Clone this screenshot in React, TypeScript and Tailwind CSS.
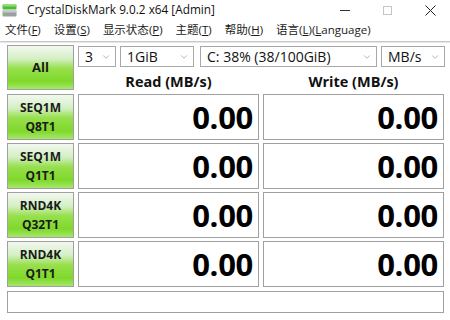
import { ChevronDown } from "lucide-react";

const font = { fontFamily: '"Open Sans", "Noto Sans CJK SC", sans-serif' };

const menus = [
  ["文件", "F"],
  ["设置", "S"],
  ["显示状态", "P"],
  ["主题", "T"],
  ["帮助", "H"],
];

const tests = [
  ["SEQ1M", "Q8T1"],
  ["SEQ1M", "Q1T1"],
  ["RND4K", "Q32T1"],
  ["RND4K", "Q1T1"],
];

function AppIcon() {
  return (
    <svg width="15" height="13" viewBox="0 0 15 13">
      <rect x="0.5" y="0.5" width="14" height="5" rx="1" fill="#4cbb3c" />
      <rect x="0.5" y="0.5" width="14" height="2" rx="1" fill="#8fdc6a" />
      <rect x="0.5" y="6.5" width="14" height="6" rx="1" fill="#9aa0a4" />
      <rect x="0.5" y="6.5" width="14" height="2" fill="#c6cacc" />
      <rect x="2" y="9.5" width="3" height="1.5" fill="#5fd040" />
    </svg>
  );
}

function Select({ width, label }: { width: string; label: string }) {
  return (
    <div
      className={`${width} h-[21px] flex items-center justify-between border border-[#a8a8a8] bg-white pl-[6px] pr-[4px] text-[14px] text-[#111]`}
    >
      <span className="leading-none">{label}</span>
      <ChevronDown className="w-[10px] h-[10px] text-[#888]" strokeWidth={1.5} />
    </div>
  );
}

function GreenButton({ children, className }: { children: React.ReactNode; className: string }) {
  return (
    <div
      className={`${className} w-[67px] flex flex-col items-center justify-center border border-[#a0a0a0] bg-[linear-gradient(180deg,#f2f8ef_0%,#d4efc4_30%,#97e04c_52%,#7fd82a_82%,#a6e86c_100%)] font-bold text-[12px] text-[#1a1a1a]`}
    >
      {children}
    </div>
  );
}

function Value() {
  return (
    <div className="w-[181px] h-[46px] flex items-center justify-end border border-[#a0a0a0] bg-white pr-[5px]">
      <span className="text-[31px] font-bold leading-none text-black tracking-[-0.3px]">0.00</span>
    </div>
  );
}

export default function App() {
  return (
    <div className="w-[450px] h-[320px] bg-white overflow-hidden text-[#111]" style={font}>
      {/* title bar */}
      <div className="h-[20px] flex items-center relative">
        <div className="ml-[2px] mt-[1px]">
          <AppIcon />
        </div>
        <span className="ml-[10px] text-[11.8px] leading-none">CrystalDiskMark 9.0.2 x64 [Admin]</span>
        <div className="ml-auto flex items-center">
          <div className="w-[10px] h-[1px] bg-[#333] mr-[33px]" />
          <div className="w-[9px] h-[9px] border border-[#c4c4c4] mr-[33px]" />
          <svg width="11" height="11" viewBox="0 0 11 11" className="mr-[14px]">
            <path d="M0.5 0.5 L10.5 10.5 M10.5 0.5 L0.5 10.5" stroke="#222" strokeWidth="1" />
          </svg>
        </div>
      </div>

      {/* menu bar */}
      <div className="h-[20px] flex items-center pl-[5px] gap-[13px] text-[11.5px] leading-none text-[#1a1a1a]">
        {menus.map(([name, key]) => (
          <span key={key}>
            {name}(<span className="underline">{key}</span>)
          </span>
        ))}
        <span>
          语言(<span className="underline">L</span>)(<span className="underline">L</span>anguage)
        </span>
      </div>
      <div className="mt-[1px] h-[1px] bg-[#c8c8c8]" />
      <div className="h-[1px] bg-[#e6e6e6]" />

      {/* main */}
      <div className="pl-[7px] pt-[2px]">
        <div className="flex gap-[4px]">
          <GreenButton className="h-[45px] text-[13px]">All</GreenButton>
          <div className="flex flex-col">
            <div className="mt-[1px] flex gap-[4px]">
              <Select width="w-[38px]" label="3" />
              <Select width="w-[74px]" label="1GiB" />
              <div className="w-[1px] -ml-[3px]" />
              <Select width="w-[177px]" label="C: 38% (38/100GiB)" />
              <Select width="w-[64px]" label="MB/s" />
            </div>
            <div className="mt-[8px] flex gap-[4px] text-[14.5px] font-bold leading-none">
              <div className="w-[181px] text-center">Read (MB/s)</div>
              <div className="w-[181px] text-center">Write (MB/s)</div>
            </div>
          </div>
        </div>

        <div className="mt-[4px] flex flex-col gap-[3px]">
          {tests.map(([a, b], i) => (
            <div key={i} className="flex gap-[4px]">
              <GreenButton className="h-[46px] gap-[3px] leading-[16px]">
                <span>{a}</span>
                <span>{b}</span>
              </GreenButton>
              <Value />
              <Value />
            </div>
          ))}
          <div className="mt-[1px] w-[437px] h-[22px] border border-[#a0a0a0] bg-white" />
        </div>
      </div>
    </div>
  );
}
